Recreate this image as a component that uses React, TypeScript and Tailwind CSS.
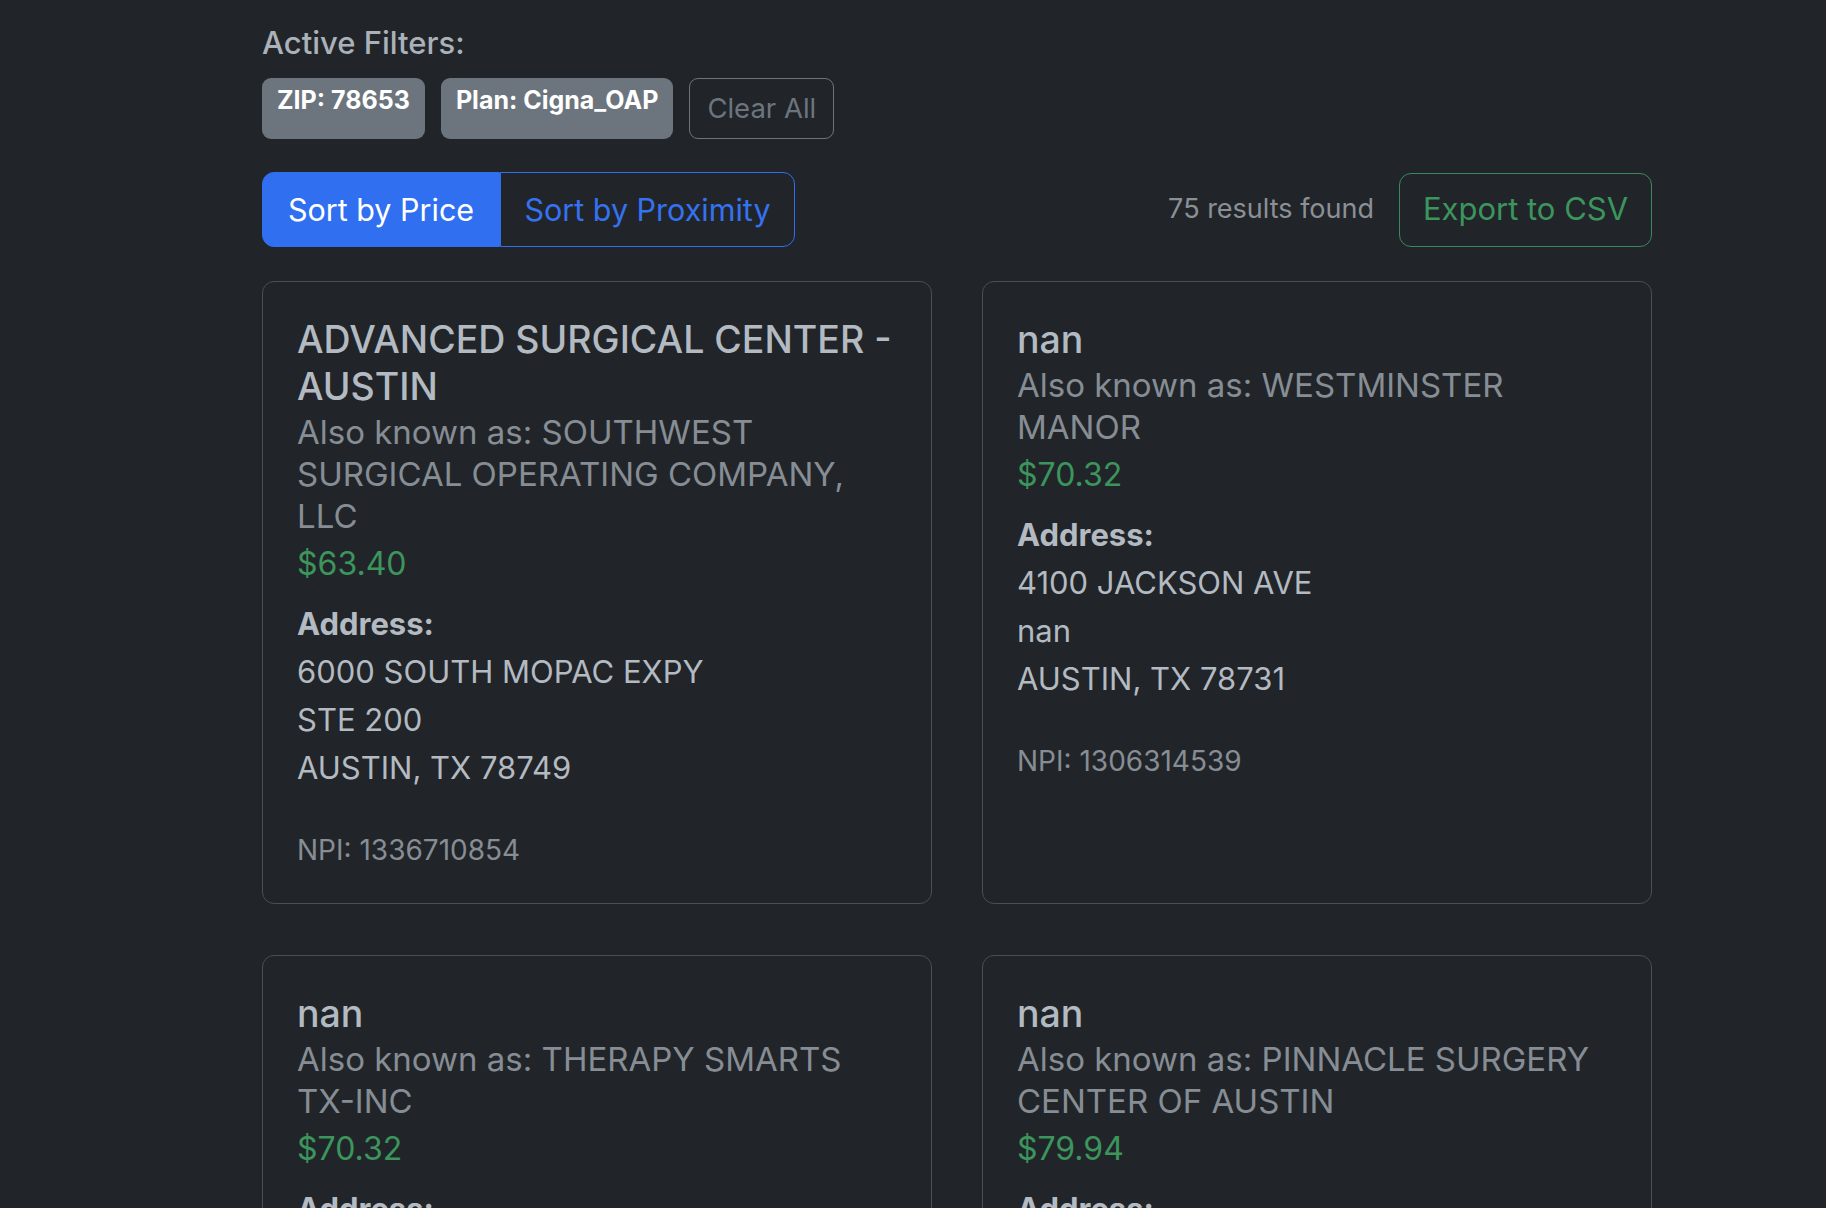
import React from "react";

type Provider = {
  name: string;
  aka: string;
  price: string;
  address: string[];
  npi: string;
};

const providers: Provider[] = [
  {
    name: "ADVANCED SURGICAL CENTER - AUSTIN",
    aka: "SOUTHWEST SURGICAL OPERATING COMPANY, LLC",
    price: "$63.40",
    address: ["6000 SOUTH MOPAC EXPY", "STE 200", "AUSTIN, TX 78749"],
    npi: "1336710854",
  },
  {
    name: "nan",
    aka: "WESTMINSTER MANOR",
    price: "$70.32",
    address: ["4100 JACKSON AVE", "nan", "AUSTIN, TX 78731"],
    npi: "1306314539",
  },
  {
    name: "nan",
    aka: "THERAPY SMARTS TX-INC",
    price: "$70.32",
    address: ["1801 E 51ST ST", "STE 365", "AUSTIN, TX 78723"],
    npi: "1457728354",
  },
  {
    name: "nan",
    aka: "PINNACLE SURGERY CENTER OF AUSTIN",
    price: "$79.94",
    address: ["4101 JAMES CASEY ST", "STE 100", "AUSTIN, TX 78745"],
    npi: "1932416575",
  },
];

function ProviderCard({ p }: { p: Provider }) {
  return (
    <div className="border border-[#4a4f55] rounded-[12px] px-[34px] pt-[34px] pb-[35px] bg-[#212529]">
      <h5 className="text-[37.5px] leading-[47px] font-medium text-[#b3bac1]">{p.name}</h5>
      <h6 className="mt-[1px] text-[33px] leading-[42px] text-[#878d94]">Also known as: {p.aka}</h6>
      <p className="mt-[6px] text-[32px] leading-[42px] text-[#3b955c]">{p.price}</p>
      <div className="mt-[15px] text-[31px] leading-[48px] text-[#b3bac1]">
        <p className="font-bold">Address:</p>
        {p.address.map((line, i) => (
          <p key={i}>{line}</p>
        ))}
      </div>
      <p className="mt-[40px] text-[28px] leading-[36px] text-[#878d94]">NPI: {p.npi}</p>
    </div>
  );
}

export default function App() {
  return (
    <div className="min-h-screen w-full bg-[#212529] font-['Inter',sans-serif] overflow-hidden">
      <div className="ml-[262px] w-[1390px] pt-[25px]">
        {/* Filters */}
        <h5 className="text-[31px] leading-[36px] font-medium text-[#aab1b8]">Active Filters:</h5>
        <div className="mt-[17px] flex h-[61px] gap-[16px]">
          <span className="rounded-[9px] bg-[#6c757d] px-[15px] pt-[10px] text-[25px] leading-none font-bold text-white">
            ZIP: 78653
          </span>
          <span className="rounded-[9px] bg-[#6c757d] px-[15px] pt-[10px] text-[25px] leading-none font-bold text-white">
            Plan: Cigna_OAP
          </span>
          <button className="rounded-[9px] border-[1.5px] border-[#6c757d] px-[17px] text-[27.5px] text-[#6c757d]">
            Clear All
          </button>
        </div>

        {/* Sort + export */}
        <div className="mt-[33px] flex items-center justify-between">
          <div className="flex h-[75px]">
            <button className="w-[238px] rounded-l-[12px] border-[1.5px] border-[#2f6ff0] bg-[#2f6ff0] text-[30.5px] text-white">
              Sort by Price
            </button>
            <button className="w-[295px] rounded-r-[12px] border-[1.5px] border-[#2f6ff0] text-[30.5px] text-[#3572f0]">
              Sort by Proximity
            </button>
          </div>
          <div className="flex items-center gap-[25px]">
            <span className="text-[27px] text-[#8b9096]">75 results found</span>
            <button className="h-[74px] w-[253px] rounded-[12px] border-[1.5px] border-[#3a8a5a] text-[31px] text-[#3b955c]">
              Export to CSV
            </button>
          </div>
        </div>

        {/* Results */}
        <div className="mt-[34px] grid grid-cols-2 gap-x-[50px] gap-y-[51px]">
          {providers.map((p, i) => (
            <ProviderCard key={i} p={p} />
          ))}
        </div>
      </div>
    </div>
  );
}
